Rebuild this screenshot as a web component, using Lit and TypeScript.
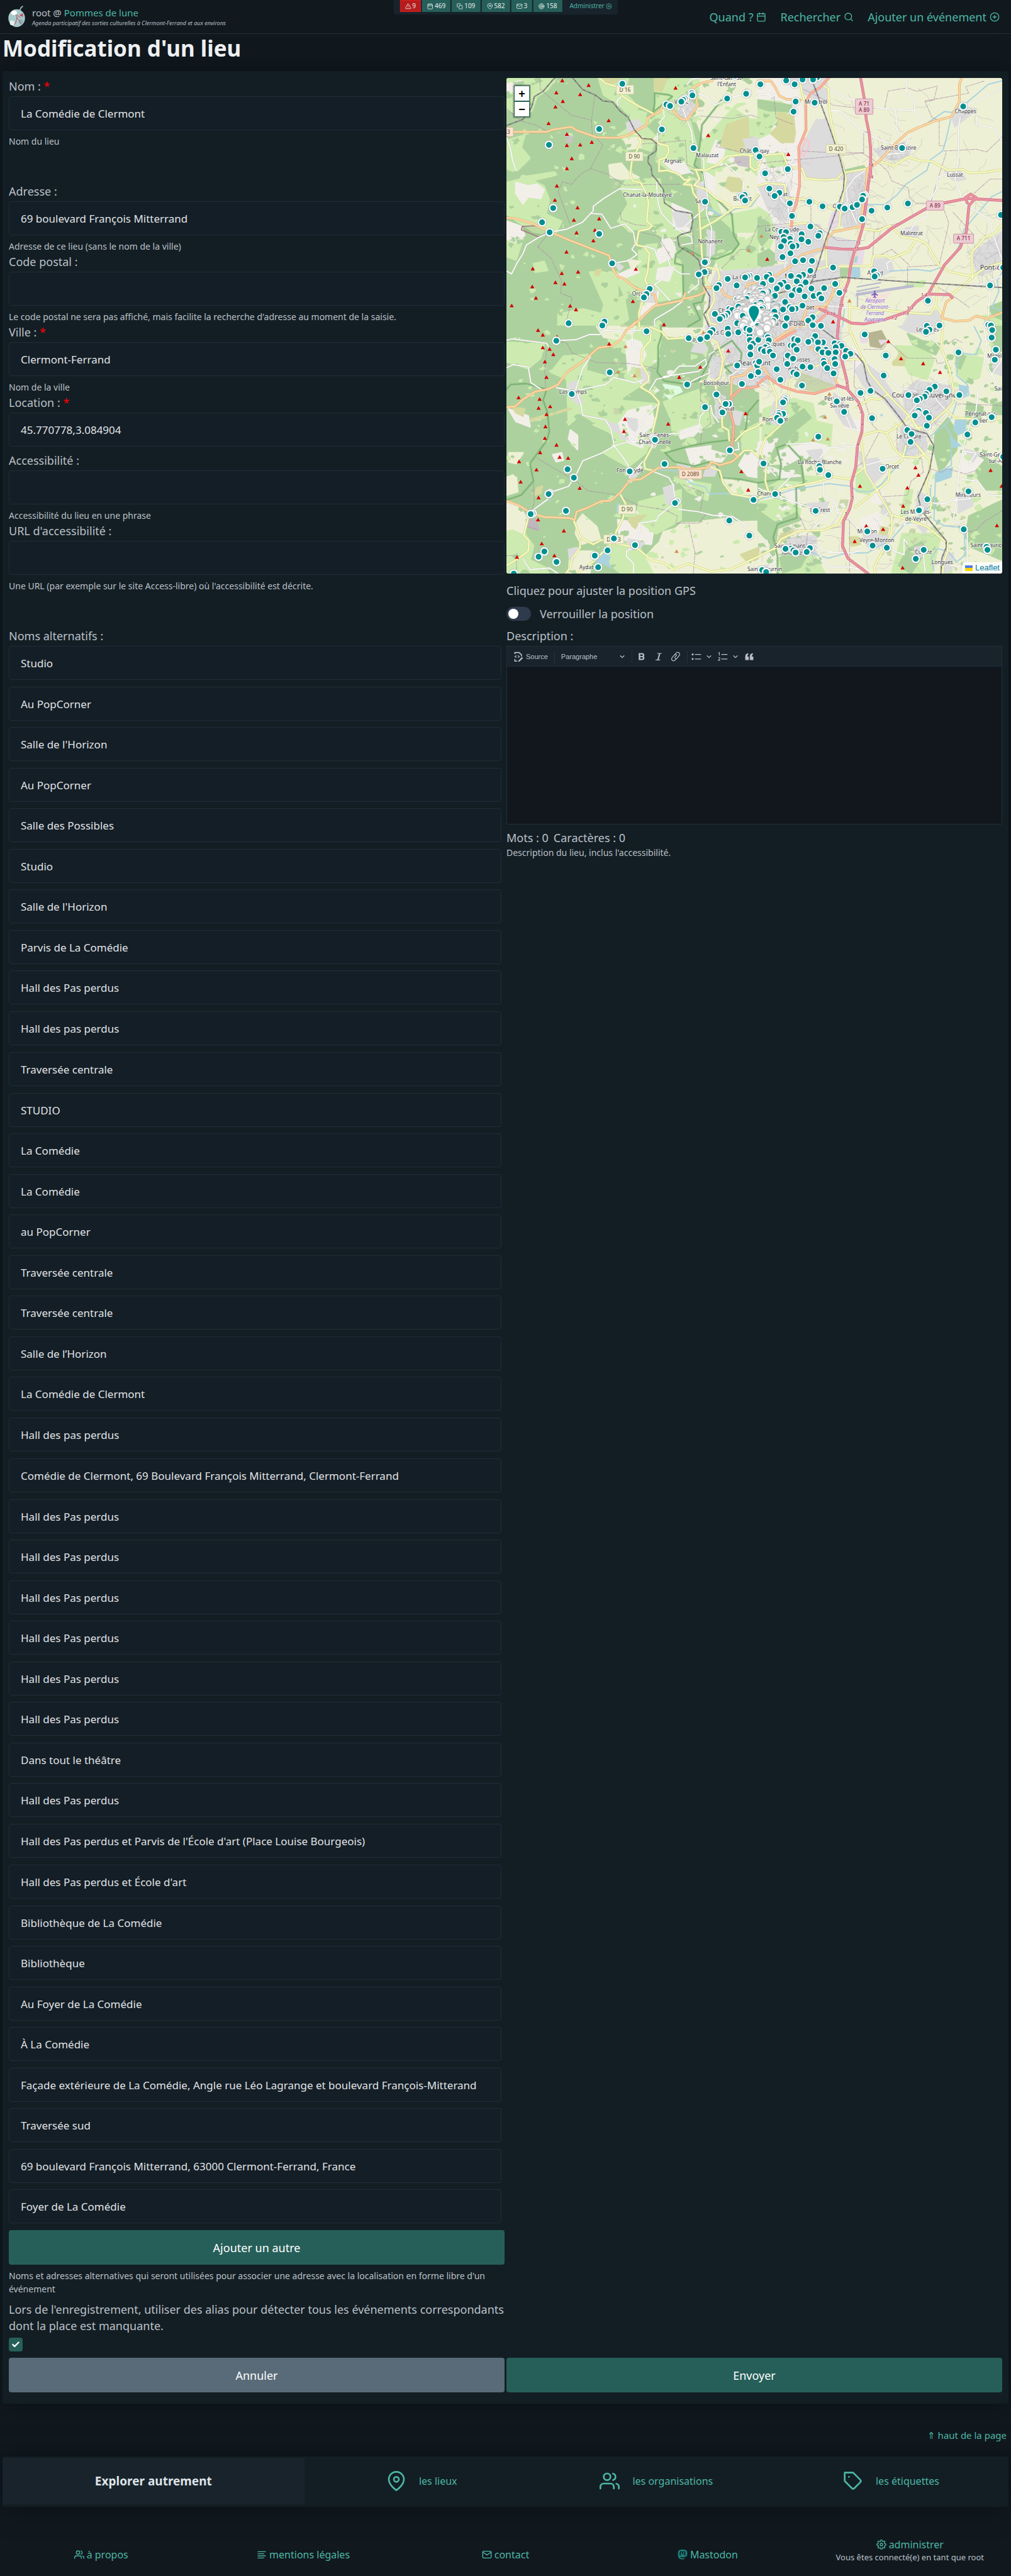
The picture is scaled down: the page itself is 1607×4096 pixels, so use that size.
import { LitElement, html, css, svg } from "lit";
import { customElement } from "lit/decorators.js";

/* ---------- Icons (24-unit stroke set) ---------- */

const GEAR = svg`<circle cx="12" cy="12" r="3"/><path d="M19.4 15a1.65 1.65 0 0 0 .33 1.82l.06.06a2 2 0 1 1-2.83 2.83l-.06-.06a1.65 1.65 0 0 0-2.8 1.17V21a2 2 0 0 1-4 0v-.09a1.65 1.65 0 0 0-2.9-1.08l-.06.06a2 2 0 1 1-2.83-2.83l.06-.06A1.65 1.65 0 0 0 3.1 14H3a2 2 0 0 1 0-4h.09a1.65 1.65 0 0 0 1.08-2.9l-.06-.06a2 2 0 1 1 2.83-2.83l.06.06A1.65 1.65 0 0 0 10 3.1V3a2 2 0 0 1 4 0v.09a1.65 1.65 0 0 0 2.8 1.17l.06-.06a2 2 0 1 1 2.83 2.83l-.06.06A1.65 1.65 0 0 0 20.9 10H21a2 2 0 0 1 0 4h-.09a1.65 1.65 0 0 0-1.51 1z"/>`;

const ICONS: Record<string, unknown> = {
  alert: svg`<path d="M10.3 3.9 1.8 18a2 2 0 0 0 1.7 3h17a2 2 0 0 0 1.7-3L13.7 3.9a2 2 0 0 0-3.4 0z"/><path d="M12 9v4M12 17h.01"/>`,
  calendar: svg`<rect x="3" y="4" width="18" height="18" rx="2"/><path d="M16 2v4M8 2v4M3 10h18"/>`,
  copy: svg`<rect x="9" y="9" width="13" height="13" rx="2"/><path d="M5 15H4a2 2 0 0 1-2-2V4a2 2 0 0 1 2-2h9a2 2 0 0 1 2 2v1"/>`,
  pin: svg`<path d="M21 10c0 7-9 13-9 13s-9-6-9-13a9 9 0 0 1 18 0z"/><circle cx="12" cy="10" r="3"/>`,
  mail: svg`<rect x="2" y="4" width="20" height="16" rx="2"/><path d="m22 6-10 7L2 6"/>`,
  target: svg`<circle cx="12" cy="12" r="10"/><circle cx="12" cy="12" r="6"/><circle cx="12" cy="12" r="2"/>`,
  gear: GEAR,
  search: svg`<circle cx="11" cy="11" r="8"/><path d="m21 21-4.3-4.3"/>`,
  plus: svg`<circle cx="12" cy="12" r="10"/><path d="M12 8v8M8 12h8"/>`,
  users: svg`<path d="M17 21v-2a4 4 0 0 0-4-4H5a4 4 0 0 0-4 4v2"/><circle cx="9" cy="7" r="4"/><path d="M23 21v-2a4 4 0 0 0-3-3.87M16 3.13a4 4 0 0 1 0 7.75"/>`,
  tag: svg`<path d="m20.6 13.4-7.2 7.2a2 2 0 0 1-2.8 0L2 12V2h10l8.6 8.6a2 2 0 0 1 0 2.8z"/><path d="M7 7h.01"/>`,
  lines: svg`<path d="M21 5H3M17 10H3M21 15H3M17 20H3"/>`,
  chevron: svg`<path d="m5 9 7 7 7-7"/>`,
};

const icon = (name: string) =>
  html`<svg class="icon" viewBox="0 0 24 24" aria-hidden="true">${ICONS[name]}</svg>`;

/* ---------- Map data: four tiles of 1440 units ---------- */

type Label = [number, number, string, number?];
interface Tile {
  dx: number;
  dy: number;
  areas: [string, string[]][];
  water: string[];
  rivers: string[];
  minor: string[];
  borders: string[];
  park: string[];
  secondary: string[];
  primary: string[];
  trunk: string[];
  motorway: string[];
  rail: string[];
  venues: string;
  peaks: string;
  hills: string;
  labels: Label[];
  shields: [number, number, string, string][];
}

const NW: Tile = {
  dx: -6, dy: -24,
  areas: [
    ["#add19e", ["0,0 960,0 1050,200 1130,400 1120,620 1200,800 1310,900 1330,980 1200,1060 1130,1200 1120,1440 0,1440"]],
    ["#cdebb0", ["6,24 290,24 240,90 180,130 150,210 90,240 6,200", "530,24 700,24 680,110 760,190 700,230 640,170 560,120", "6,380 110,350 90,420 140,480 60,560 6,540", "6,620 120,590 220,640 250,720 230,800 320,840 280,920 160,900 6,800",
      "90,590 280,560 290,575 150,610 80,612", "720,200 860,240 800,300 860,360 830,440 700,400 640,350 700,310", "690,600 880,600 900,720 1060,790 1060,920 900,930 800,880 700,890 640,840 700,740 660,650", "850,60 960,24 1100,24 1100,180 1020,280 900,330 860,250", "880,350 1050,260 1090,420 1070,540 950,560 860,500",
      "760,980 950,960 1000,1080 1010,1270 850,1300 680,1270 640,1180 760,1120", "480,1130 640,1130 640,1300 560,1310", "160,1080 220,1070 240,1120 170,1130", "300,1370 440,1340 640,1390 640,1440 300,1440", "560,1320 680,1290 700,1400 640,1440 540,1410", "1110,400 1340,150 1440,240 1440,900 1310,900 1200,800 1130,640",
      "1200,1060 1330,980 1440,900 1440,1130 1250,1130", "6,940 100,940 60,1060 6,1040"]],
    ["#f2efe9", ["6,60 90,40 90,90 6,110", "60,620 130,640 180,630 220,660 200,710 130,700 100,740 60,680", "6,840 90,870 110,920 60,960 6,940", "900,930 970,950 960,1040 880,1080 860,1030", "870,1110 960,1100 930,1180 860,1170", "900,500 1010,500 1050,560 980,575", "1200,380 1250,420 1230,520 1150,500", "950,740 1060,790 1040,900 960,870", "800,1250 870,1240 860,1300 770,1400 770,1310", "1140,560 1200,600 1190,700 1140,660", "630,1150 740,1100 760,1130 660,1170"]],
    ["#eef0d5", ["590,520 660,510 700,560 760,590 660,600 600,590", "675,370 780,360 770,420 700,430", "1320,200 1440,150 1440,250 1400,250", "1200,560 1340,500 1440,600 1440,760 1240,800 1200,700", "700,1060 770,1070 720,1110", "1110,24 1440,24 1440,150 1260,170 1150,110"]],
    ["#d6d99f", ["1380,250 1385,360 1410,430 1340,450 1225,410 1260,290", "1270,590 1350,600 1340,670 1290,670 1250,640", "850,24 920,30 890,100 850,90", "560,24 650,24 630,50 580,55", "515,1120 545,1115 530,1150 508,1145"]],
    ["#c9c3c6", ["320,360 350,340 385,355 375,390 315,375", "1290,480 1390,470 1390,530 1330,520"]],
    ["#dddcdc", ["990,170 1040,150 1090,190 1040,260 990,230", "690,280 750,260 790,310 700,330", "1080,600 1140,640 1150,760 1110,780", "1150,890 1190,900 1190,1020 1150,1060", "950,790 1040,790 1050,870 980,870", "1350,370 1440,360 1440,430 1370,430", "800,1220 860,1240 850,1300 800,1300", "610,1060 670,1100 650,1120", "1200,1130 1440,1110 1440,1440 1150,1440 1160,1230"]],
    ["#b4dd9f", ["1110,770 1200,800 1250,810 1130,885"]],
  ],
  water: ["1150,750 1220,800 1210,806 1148,760", "770,655 780,660 760,670"],
  rivers: ["1150,760 1210,805 1260,800 1310,770 1400,755 1440,700"],
  minor: ["8,365 30,430 40,490 60,550", "252,903 185,935 120,975 100,1025 65,1080 35,1140 8,1125", "252,903 350,885 440,845 500,780 500,755 560,710 650,655 790,660", "485,795 550,800 600,880 680,855 730,905 740,970 720,1000 750,1030 700,1065 610,1080",
    "865,340 865,400", "900,205 905,245 880,275 885,300", "1035,265 1060,330 1070,420 1110,460", "1010,200 1035,265", "1100,115 1150,130 1195,180 1263,141 1371,114", "860,620 870,740 890,795 930,840 1000,900 1060,930 1065,965 1005,975", "790,980 850,1000 860,1030 920,1040 940,1100 1000,1140 1050,1140",
    "1110,460 1130,490 1130,560 1150,700 1145,800 1175,880 1165,1050", "1250,510 1320,570 1355,610 1360,690", "850,1200 900,1250 935,1290", "920,1110 910,1160 850,1200", "1010,1295 950,1340 850,1400 850,1440", "965,510 1010,530 1070,570", "665,125 635,155 640,180", "1100,1150 1100,1200 1040,1245", "1130,770 1000,890", "1035,60 1060,30 1110,24"],
  borders: ["195,25 200,90 320,190 375,235 490,265 510,120", "490,265 495,345 555,405 485,540 430,570 375,630 325,615 300,670 370,860", "485,540 580,570 680,635 850,630 1000,630", "185,985 260,1050 320,1180 315,1250 380,1275 350,1400", "1110,240 1290,255 1400,235 1440,250", "780,400 1025,380 1035,520 1120,555 1340,500", "10,200 90,270 170,290 235,325", "655,790 660,830 740,860 800,865", "185,985 250,905", "1225,380 1200,415 1340,445", "1070,830 1290,800", "780,905 870,925 950,1060", "1230,1110 1340,1000 1380,1000 1440,860", "1060,800 1070,940 1070,1020"],
  park: ["1230,150 1120,290 1105,420 1075,520 1130,570 1140,660 1230,740 1290,800 1300,920 1330,970 1290,1020 1200,1055 1120,1045 1020,990 970,1030 965,1080 1010,1090 1015,1290", "850,110 930,120 950,130 890,180 840,220 850,170 850,110", "1040,1440 1110,1400 1070,1310 1120,1300 1135,1250"],
  secondary: ["535,25 570,55 640,75 665,125 700,150 760,185 850,230 900,205", "725,340 760,350 770,390 720,500 710,575 725,612 770,620 795,665 815,730 805,840 835,865 815,885 760,895 745,975 790,985 820,1025 810,1130 795,1175 820,1225 780,1300 760,1360 762,1440", "760,375 830,370 880,400 925,410 930,445 910,480 875,490 875,555 920,550 985,570 1020,605 1055,600 1015,630 1060,635 1070,680 1100,720 1110,885 1120,1045 1145,1100 1140,1180 1185,1240 1190,1290 1150,1370 1165,1420 1200,1430",
    "1075,545 1140,550 1205,520 1260,470 1345,460 1440,470", "1085,550 1105,600 1075,635 1145,660 1200,710 1300,762 1380,758 1440,690", "1110,885 1200,835 1300,765", "1145,1100 1210,1115 1220,1160 1190,1210", "1395,460 1395,530 1420,550 1440,540"],
  primary: ["0,331 235,331 270,318 375,302 405,322 520,362 635,365 685,355 805,293 812,250 880,215 895,185 940,185 975,235 1000,256 1035,262 1095,180 1085,135 1065,85 1110,55 1180,38", "0,820 60,825 160,855 252,900 370,950 590,1035 610,1110 640,1155 675,1168 740,1220 850,1260 865,1315", "720,1440 845,1325 1010,1290 1025,1250", "1025,1280 1100,1262 1135,1245 1130,1215 1230,1225 1245,1260 1300,1280", "1370,1230 1380,1200 1440,1185"],
  trunk: [], motorway: [],
  rail: ["0,297 100,260 150,190 165,130 215,100 270,35 290,20", "380,20 440,90 510,120 555,155 610,160 650,210 700,250 735,320 780,370 830,372 860,395 858,440 815,470 812,505 830,530 835,575 865,610 900,660 905,735 970,780 1060,795 1068,830 1055,900 1000,915 980,930 990,985 1060,1025 1100,1060 1120,1130 1125,1200 1165,1270 1160,1330 1130,1370 1160,1440"],
  venues: "666,57 534,315 248,405 891,317 1071,423 1062,110 1065,123 1022,142 1012,148 1002,159 917,175 938,183 1308,10 1263,141 1378,110 1371,114 1425,435 1440,468 1137,729 1340,697 1362,690 1350,703 1365,722 272,765 209,846 252,903 534,912 608,1080 822,1225 803,1255 789,1274 1145,1071 1136,1074 1134,1130 1101,1143 1266,1169 1317,1206 1215,1204 1202,1221 1390,1150 1378,1155 1365,1160 1433,1163 1410,1230 1430,1243 360,1421 564,1412 552,1434 1193,1368 1275,1340 1292,1345 1265,1365 1250,1380 1235,1385 1221,1397 1320,1285 1325,1302 1317,1357 1352,1362 1358,1378 1320,1421 1348,1430",
  peaks: "324,38 290,107 327,156 285,188 246,282 474,65 426,117 588,266 969,80 1155,350 350,344 350,407 426,404 492,389 378,482 350,539 293,638 282,719 411,762 390,833 534,825 510,890 405,905 501,950 348,1014 156,1110 321,1136 414,1128 285,1188 336,1196 153,1212 174,1277 36,1320 369,1322 402,1343 743,1112 726,1296 903,1428",
  hills: "1065,1022 1386,1004",
  labels: [[1260, 34, "Saint-Genest-"], [1260, 70, "l'Enfant"], [1002, 170, "Volvic"], [1150, 476, "Malauzat"], [1418, 450, "Châteaugay"], [953, 508, "Argnat"], [809, 700, "Chanat-la-Mouteyre"], [1118, 738, "Sayat"], [1350, 724, "Blanzat"], [1167, 967, "Nohanent"], [1130, 1140, "Durtol"], [775, 1264, "Orcines"], [1370, 1172, "La Glacière"], [1300, 1360, "Chamalières"]],
  shields: [[681, 91, "D 16", "d"], [734, 471, "D 90", "d"], [10, 331, "43", "n"]],
};

const NE: Tile = {
  dx: 1434, dy: -24,
  areas: [
    ["#f2efe9", ["0,24 200,24 250,200 240,540 200,800 120,880 0,860"]],
    ["#cdebb0", ["0,150 130,160 200,200 100,260 60,340 0,370", "0,760 60,800 100,900 60,1000 0,960", "40,470 150,460 160,520 60,530", "850,1190 950,1180 940,1210 830,1215", "1280,1380 1389,1360 1389,1440 1300,1440"]],
    ["#add19e", ["0,150 60,160 190,180 170,215 60,210 0,190", "0,820 60,850 70,920 20,980 0,940", "0,1030 60,1000 120,1050 60,1110 0,1090", "490,550 600,525 610,540 580,570 500,580", "455,1110 510,1110 510,1155 455,1155", "1310,1330 1389,1300 1389,1400 1340,1380"]],
    ["#d6d99f", ["110,220 200,240 210,340 200,390 130,390 70,340 110,300", "180,1090 240,1100 210,1130"]],
    ["#dddcdc", ["170,60 240,50 260,110 290,130 390,170 390,24 240,24 180,24", "330,262 380,262 430,400 490,530 480,600 380,610 270,590 240,540 235,440", "490,580 620,540 620,640 590,850 500,880 460,850 490,760", "660,430 780,410 830,390 870,430 850,470 790,490 700,480", "1100,240 1180,190 1240,200 1200,240 1120,300", "1060,550 1150,550 1180,600 1120,610 1080,580", "660,1060 750,1050 770,1120 700,1150 650,1130", "110,640 160,620 190,760 150,850 80,800", "0,640 100,630 120,760 60,780", "840,880 910,870 910,930 840,920", "1230,1010 1389,900 1389,1100 1260,1150 1230,1080", "390,920 570,960 530,1080 400,1080", "0,1110 200,1080 460,1060 460,1440 0,1440", "860,1370 1030,1350 1040,1440 820,1440", "100,870 350,860 380,1000 230,1080 100,1060"]],
    ["#e8dbe7", ["420,800 450,770 465,850 420,890 400,860", "540,1020 600,1010 590,1080 530,1090"]],
    ["#f4e2db", ["300,1180 330,1130 450,1110 455,1155 360,1180", "630,1270 750,1250 700,1310 620,1300"]],
  ],
  water: ["530,1100 580,1100 580,1160 530,1160", "535,1040 570,1040 560,1080 540,1070"],
  rivers: ["1389,40 1310,60 1240,120 1180,170 1100,220 1060,215 970,275", "1095,260 1080,330 1065,390 1050,440 980,490 960,550 900,590 840,630 790,690 720,745 620,745", "1389,670 1330,700 1280,760 1220,830 1170,890 1160,950 1110,1040 1060,1095 980,1125 900,1115 750,1125", "1389,1130 1360,1180 1370,1240 1330,1330 1389,1350", "480,1440 490,1340"],
  minor: ["400,80 500,140 550,150", "660,190 780,205 890,210 940,270 905,310", "840,20 845,105 890,150 890,210", "780,205 790,290 780,300 800,330 800,380", "410,210 460,210 540,280 600,335 700,380 770,400", "1389,80 1240,160 1180,180", "1240,230 1245,290 1340,310 1389,380", "1150,250 1140,300 1140,450 1130,550 1120,600 1150,680 1160,735 1320,830 1335,910", "1100,560 1020,590 1015,660 970,730", "610,550 550,590 500,660 510,740 560,850", "970,770 960,810 890,850 870,890 800,890", "740,1120 730,1080 760,1060", "1320,1206 1310,1390 1280,1440", "1389,1150 1250,1205 1210,1200", "1335,910 1389,1060", "0,120 90,115", "130,450 230,415 180,520", "120,700 170,760 180,860", "155,560 160,640", "150,1120 160,1040 130,1000", "380,1320 520,1335", "730,460 830,450 860,340"],
  borders: ["240,80 300,110 370,145 430,180 570,195 720,195 740,98 850,80 900,100 1020,70 1000,150 950,160 990,250 1030,265 1030,410 1060,410", "250,440 420,450 600,450 600,330 630,335", "0,510 100,500 430,470 600,450", "590,450 700,520 740,560 760,610 855,650 860,700 900,740 970,740", "1060,440 1240,430 1300,445 1389,360", "1070,450 1010,640 980,740", "1060,780 1085,850 1070,920 1030,1090 850,1100 850,1210", "1110,790 1230,920", "1230,680 1320,600 1389,600", "90,130 100,250 200,290", "180,700 300,740 300,860", "650,1090 660,890 800,850 970,770", "700,1030 760,1000 860,1090", "1020,1215 1110,1265 1200,1330", "950,155 1200,110 1180,75 1290,40", "0,870 200,850 330,860 450,950 600,950"],
  park: [],
  secondary: ["365,65 400,85 405,210 430,350 490,560 500,600 470,770 460,870 430,900", "190,535 250,540 270,595 380,605 450,600 480,565 620,540", "700,500 770,525 850,475 920,495 990,500 1080,550 1165,545 1200,565 1300,560 1389,545", "160,710 280,715 400,760 480,790", "0,640 40,625 150,630 160,710", "580,880 680,895 750,865 820,930 900,940 960,970 1030,1090 1100,1130 1220,1155 1300,1100 1389,1075", "900,940 860,1010 750,1055 730,1035 655,1040 645,1095 530,1095 385,1100 300,1120 200,1200 120,1260", "1220,1155 1215,1020 1290,930 1340,915 1389,860", "1220,1160 1100,1260", "520,1330 700,1345 850,1360 980,1370 1010,1320 1020,1220 1005,1200", "1050,1440 1050,1380 1010,1320", "0,530 30,465 140,455 165,520", "240,60 260,150", "385,990 390,1100", "580,880 560,1000 510,1160 380,1320 260,1440", "480,1160 330,1250 200,1330", "180,860 270,850 340,880", "520,1440 520,1290"],
  primary: ["0,40 70,40 95,75 120,125 160,145 240,150", "1160,20 1145,60 1145,160 1100,245 1000,270 900,312 850,335 790,390 700,485 660,520 620,540 615,640 595,770 580,870 430,900 390,940 385,990 250,1030 180,1100 100,1150 0,1180", "1105,1275 1070,1300 1045,1390 1120,1410 1200,1405 1240,1380 1300,1395 1389,1360", "440,1180 420,1260 385,1330 280,1330 240,1440"],
  trunk: ["405,20 350,80 300,110 270,160 272,320 230,420 235,560 235,640 215,750 190,800 190,870", "385,1330 385,1370 330,1420"],
  motorway: ["582,20 605,150 615,260 632,340 640,430 640,540 625,640 600,850 570,960 545,1020 525,1100 515,1180 480,1270 465,1350 455,1440", "385,990 470,998 560,1000 625,990 760,880 960,765 1060,735 1190,710 1389,722", "1190,735 1180,705 1210,685 1240,705 1200,750 1185,900 1150,990 1060,1090 970,1250 900,1300 850,1355 720,1400 600,1425 530,1420 470,1390 350,1340", "970,1255 1090,1258 1105,1275", "640,525 640,580"],
  rail: ["315,60 400,290 465,480 490,580 485,660 440,790 380,960 330,1120 290,1220", "0,1290 120,1250 330,1180 480,1160 700,1175 1000,1195 1389,1218", "90,1380 130,1410 250,1412 360,1440"],
  venues: "159,38 207,60 252,33 335,20 312,33 12,60 213,158 321,165 201,216 1167,186 819,423 7,471 168,543 39,567 63,654 120,678 93,696 180,738 291,729 366,755 192,810 465,757 500,755 496,762 492,768 537,760 562,747 605,690 597,695 591,716 645,780 735,762 852,739 591,828 297,870 1382,804 132,900 158,902 144,930 185,930 180,940 147,952 247,914 246,943 285,957 350,908 342,923 185,968 218,980 195,984 129,984 183,1023 138,1044 210,1068 255,1062 306,1066 426,1104 297,1122 660,1125 675,1148 663,1155 62,1145 48,1157 75,1175 27,1197 186,1152 255,1145 232,1158 270,1188 219,1182 145,1190 125,1202 105,1223 168,1215 210,1232 240,1215 234,1233 303,1223 375,1221 438,1197 462,1248 57,1240 190,1262 264,1268 315,1266 348,1258 360,1280 95,1265 60,1283 153,1300 252,1321 90,1310 110,1320 105,1337 141,1343 180,1330 213,1338 192,1341 65,1337 162,1392 309,1387 285,1406 45,1365 310,1432 357,1436 153,1436 966,1293 1320,1206 1395,1104 960,1436 1032,1434 1310,1430 1325,1434 50,1395",
  peaks: "171,458 51,1056 426,1412",
  hills: "18,924 519,1293",
  labels: [[328, 171, "Ménétrol"], [1180, 224, "Chappes"], [799, 433, "Saint-Beauzire"], [110, 697, "Cébazat"], [1120, 588, "Lussat"], [470, 767, "Gerzat"], [873, 919, "Malintrat"], [140, 899, "La Combaude-"], [110, 941, "Neyrat"], [240, 1164, "Montferrand"], [666, 1144, "Aulnat"], [1340, 1117, "Pont-du-", 38], [270, 1344, "Herbet"], [80, 1374, "Centre"], [175, 1436, "La Raye-Dieu"]],
  shields: [[603, 187, "A 71|A 89", "a"], [443, 429, "D 420", "d"], [1007, 751, "A 89", "a"], [1169, 939, "A 711", "a"]],
};

const SW: Tile = {
  dx: -6, dy: 1416,
  areas: [
    ["#add19e", ["0,0 720,0 850,120 860,240 1000,320 1290,330 1440,380 1440,900 1440,1100 1000,1110 850,1240 700,1407 0,1407", "880,60 1160,80 1200,180 1140,300 900,310 865,200"]],
    ["#cdebb0", ["6,90 220,100 200,180 130,240 6,200", "330,170 470,160 460,250 600,290 760,220 780,330 640,420 860,440 780,520 520,550 430,500 360,560 350,300 260,260", "500,560 720,500 840,620 800,720 700,800 560,720 650,660 590,600", "560,0 880,0 890,50 860,200 780,250 700,160 600,110", "900,430 1100,360 1120,470 1020,560 940,520", "6,1120 110,1180 160,1250 140,1330 300,1407 6,1407", "760,1000 1000,930 1000,1100 860,1180 740,1130", "600,1180 760,1250 840,1407 660,1407 560,1330", "940,440 1140,380 1190,560 1060,600 950,590", "1340,600 1440,550 1440,700 1350,700", "980,870 1170,900 1150,990 1040,940", "1130,90 1150,130 1140,170 1125,150"]],
    ["#eef0d5", ["6,990 80,1020 120,1090 110,1180 40,1150 6,1160", "410,1110 440,1070 520,1140 540,1210 430,1240 400,1180", "850,1300 900,1170 1120,1110 1300,1100 1350,1180 1440,1220 1440,1330 1260,1370 1040,1350 900,1390", "370,1280 500,1280 480,1407 360,1407", "1240,860 1440,890 1440,960 1280,950", "520,0 740,0 710,80 560,60", "6,860 60,840 70,940 6,960", "20,720 100,720 60,780 20,770", "1110,1110 1280,1090 1340,1160 1300,1230 1100,1240"]],
    ["#f2efe9", ["20,470 130,510 140,570 60,540", "370,590 410,620 410,700 360,640", "690,60 770,90 800,160 770,220 820,290 760,310 700,260 690,150", "640,560 700,480 830,450 850,560 790,600 780,690 700,660", "1030,700 1170,680 1160,760 1060,790", "1370,720 1440,720 1440,860 1380,850 1330,790", "640,1100 760,1120 840,1180 830,1240 650,1220", "980,600 1110,560 1120,600 1000,640", "270,730 320,720 330,760 290,770", "1120,690 1260,730 1230,770 1120,760"]],
    ["#d6d99f", ["700,1085 800,1075 760,1110 740,1150 705,1120", "40,460 110,470 100,510 60,490", "140,530 370,465 375,468 150,540", "740,240 770,240 770,290 740,290", "1340,1300 1440,1260 1440,1330 1370,1330", "180,920 210,910 200,950 165,960"]],
    ["#dddcdc", ["360,330 400,310 410,380 440,430 410,440 370,400", "570,540 640,560 660,640 700,640 600,580", "690,520 750,530 750,600 710,580", "1160,160 1220,180 1230,300 1170,290", "820,600 870,650 850,690 820,680", "700,830 770,820 720,880", "1190,380 1250,400 1240,520 1200,520", "1300,480 1350,490 1330,560 1300,550", "1150,790 1210,800 1190,850 1130,850", "1090,80 1150,120 1130,150 1060,140", "1140,0 1440,0 1440,340 1290,320 1250,120 1160,60", "700,1210 790,1230 760,1270 700,1270", "980,780 1050,790 1050,820 990,820", "770,240 820,260 820,320 780,320", "360,1270 410,1260 380,1340 365,1320", "900,920 960,900 950,1010 920,1010"]],
    ["#bfb7bb", ["120,1100 175,1100 190,1160 130,1140"]],
    ["#dffbe2", ["900,330 990,345 1005,370 960,390 935,410 905,385 925,370"]],
  ],
  water: ["545,1280 600,1310 590,1340 605,1380 550,1350 530,1390 510,1330 525,1300", "635,1005 655,1010 645,1060 632,1060", "250,980 262,985 255,1005"],
  rivers: ["870,815 960,820 1010,850 1060,895 1140,915 1160,955 1260,950 1320,965 1440,990"],
  minor: ["0,80 40,70 235,95 245,115", "290,80 400,75 480,45 540,45 560,20 670,25 800,20", "0,238 45,217 130,230 145,320 205,358", "485,170 440,240 400,360 430,440 440,505 570,530 600,580 620,680 670,745 705,800", "380,370 570,330 620,290 740,320 790,300", "290,348 380,365", "870,440 790,520 720,650 620,680 550,720 440,765 410,830 385,870 360,910 270,940 240,985 150,1050", "720,655 850,645", "850,615 980,610 1100,570 1110,510 1137,480", "820,365 860,300 930,285 990,225 1080,225 1140,185 1145,215 1100,255 900,285", "1035,330 1080,300 1160,265 1160,240", "840,825 930,860 955,900 965,980", "966,1005 920,1040 870,1080 860,1105 760,1120 765,1160 740,1245", "985,1040 1100,1055 1180,1075 1290,1080 1370,1130 1340,1180 1389,1195", "740,1250 690,1280 690,1310 730,1350 730,1407", "100,1325 140,1385 250,1375 300,1407", "720,30 725,110 770,140", "1137,460 1170,450 1180,500 1215,545", "1280,280 1340,240 1420,240", "1160,160 1190,140", "705,860 780,770", "0,1030 60,1010", "1325,660 1330,700 1290,705", "1010,1407 1020,1370"],
  borders: ["290,80 350,95 380,150 520,205 700,210 790,225 860,240", "235,130 225,240 228,358", "180,750 300,820 400,880 470,935 640,960 760,1020 910,1045 980,1080 970,1120 1100,1120 1150,1060", "1115,320 1110,420 1160,470 1170,550 1120,590 1110,670", "160,890 165,1000 120,1140 190,1160", "1045,1130 1080,1290 1070,1407", "150,930 165,950", "1010,900 1130,945 1110,1050", "0,1305 60,1305 65,1390"],
  park: ["0,365 30,330 120,325 235,358 215,420 240,490 250,600 235,650 140,780 160,880 90,960 0,990", "885,0 890,50 870,110 870,220 865,260 905,310 1010,325 1100,310 1140,240 1180,150 1290,80 1345,150 1340,200 1250,230 1290,270", "910,720 1050,680 1160,660 1330,640 1370,580 1380,490 1440,420", "910,720 960,770 1080,795 1160,770", "1200,780 1225,860 1340,870 1440,890"],
  secondary: ["830,20 825,80 780,130 772,210 815,280 815,310 770,345 830,380 875,430 860,510 840,590 838,680 790,770 795,810 840,820", "765,10 830,5 890,30 925,70 1000,65 1160,65 1205,90 1240,190 1220,290 1190,310 1210,400 1230,440 1235,570 1270,590 1275,650", "650,950 685,1010 670,1090 630,1170 620,1240", "390,1105 425,1200 500,1240 550,1215 600,1230 700,1250 760,1270 830,1330 900,1345 960,1385 1040,1350 1170,1395 1290,1380 1440,1310", "425,1220 425,1260 380,1320 370,1370 345,1407", "410,1407 500,1340 600,1240", "130,1090 105,1190 135,1220 130,1280 60,1330 0,1365", "1170,800 1220,820 1240,890 1290,955 1410,975", "1325,740 1360,705 1400,705 1440,740", "1310,650 1360,600 1440,565"],
  primary: ["0,460 55,455 100,415 170,370 240,358 300,330 350,260 440,200 530,120 610,110 660,70 690,20 740,-25", "0,990 80,1020 140,1060 220,1085 360,1090 395,1100 405,1055 460,1035 545,995 600,992 650,950 710,875 770,870 870,805 990,800 1040,815 1150,805 1175,770 1220,790 1290,770 1325,740 1278,705", "1285,400 1290,290 1360,275 1390,240 1440,225"],
  trunk: ["1440,340 1390,350 1345,350 1290,400 1280,490 1300,560 1298,620 1285,700"],
  motorway: [], rail: [],
  venues: "804,27 290,81 594,261 378,384 1035,330 1044,66 1110,72 1180,20 1165,37 1149,60 1266,12 1269,42 1326,33 1371,26 1395,22 1440,30 1390,50 1392,77 1420,90 1410,98 1395,117 1395,159 1320,222 1425,208 1434,222 1420,273 1398,282 1347,327 1202,387 1273,441 1254,441 1236,489 1137,459 1278,705 840,633 845,638 852,645 906,783 708,825 354,813 390,861 252,948 246,954 345,1050 155,1065 144,1068 975,997 966,1005 1413,987 1275,1105 1389,1191 618,1207 738,1245 582,1275 509,1305 528,1371 222,1281 189,1311 291,1341 48,1407",
  peaks: "186,20 213,47 213,119 252,128 273,158 225,200 591,98 234,288 1269,138 1110,230 990,288 75,404 195,413 189,464 255,455 234,500 681,527 675,596 927,554 228,569 225,636 291,674 198,717 309,743 357,749 78,768 177,815 87,884 423,920 189,974 186,1100 333,1163 207,1236 66,1313 279,1304 1368,495 1344,825 1383,930 294,58",
  hills: "684,113 642,258 735,279 1128,33 975,1280",
  labels: [[385, 382, "Laschamps"], [1201, 331, "Boisséjour"], [852, 631, "Saint-Genès-"], [852, 670, "Champanelle"], [709, 831, "Fontfreyde"], [461, 1382, "Aydat"], [1260, 480, "Ceyrat"], [1418, 220, "Beaumont", 38], [1085, 86, "Royat"], [1250, 44, "Les Carmes"], [1478, 1393, "Saint-Saturnin"]],
  shields: [[1054, 841, "D 2089", "n"], [693, 1042, "D 90", "d"], [617, 1212, "D 213", "d"]],
};

const SE: Tile = {
  dx: 1434, dy: 1416,
  areas: [
    ["#cdebb0", ["30,470 200,410 310,440 330,540 420,560 410,680 180,670 60,760 20,680", "0,880 250,850 400,860 260,900 0,960", "0,1000 120,980 240,1040 230,1110 90,1140 0,1100", "780,110 960,120 1000,190 960,300 860,270", "1120,150 1280,180 1260,290 1180,320 1130,260", "820,1180 1040,1180 990,1407 760,1407", "560,810 640,820 650,960 560,940", "120,1330 320,1300 380,1407 120,1407", "840,930 880,930 850,1070 810,1080"]],
    ["#add19e", ["70,640 130,560 260,470 300,520 200,600 150,680 80,760", "0,800 130,790 130,700 240,730 260,880 120,870 0,930", "90,1120 220,1060 240,1100 110,1150 90,1300 60,1320 80,1180", "1130,700 1060,800 1030,820 1000,700 1010,600 1080,520 1130,600", "1250,720 1389,800 1389,930 1300,930 1240,850", "1200,1080 1389,990 1389,1330 1220,1260 1180,1200", "850,40 930,80 1040,100 1010,160 880,100", "0,1050 100,1120 80,1250 0,1160", "120,1300 300,1260 240,1370 140,1400", "850,1270 940,1220 940,1300 870,1407 800,1360", "1320,0 1389,0 1389,130 1340,180", "1130,150 1180,170 1150,240 1130,230", "1340,440 1389,430 1389,500 1330,500", "1190,430 1280,460 1260,540 1180,520"]],
    ["#f2efe9", ["0,660 110,640 60,740 0,720", "120,710 300,660 390,680 340,760 250,740 140,800", "60,800 240,850 130,860", "160,900 240,920 220,1020 160,980", "640,950 700,930 720,1010 650,1000", "580,1100 680,1060 720,1150 600,1180", "1170,700 1280,760 1220,830 1150,830", "520,520 580,540 600,590 500,580", "540,110 600,160 600,300 540,260"]],
    ["#d6d99f", ["810,140 835,180 830,220 770,220 765,205 790,180", "700,1140 740,1150 730,1200 690,1180", "520,1200 570,1200 580,1240 530,1250", "130,1180 200,1160 150,1220 110,1230"]],
    ["#c8d7ab", ["250,270 400,260 430,330 330,370 210,340", "470,990 510,990 500,1030 460,1030"]],
    ["#b7b491", ["630,40 700,25 730,80 700,120 640,110"]],
    ["#e8dbe7", ["580,60 620,60 620,90 590,90", "690,80 730,80 700,100"]],
    ["#dddcdc", ["0,0 470,0 470,180 440,330 260,260 80,330 0,300", "800,0 1010,0 1000,40 860,30", "600,200 700,280 760,370 850,500 820,550 700,400 600,340 550,250", "820,380 900,310 1100,340 1110,430 1000,560 900,560 840,490", "820,560 950,600 960,700 850,750 800,690", "430,380 480,420 560,590 490,560 440,480", "600,760 680,750 720,830 650,900 600,830", "720,980 770,1090 700,1060", "910,940 970,970 960,1040 900,1030", "600,1180 740,1190 720,1250 620,1250", "160,1210 330,1190 330,1300 170,1290", "90,430 160,410 140,520 100,560 60,540", "280,710 360,700 370,790 330,790", "1330,220 1389,200 1389,280 1340,260", "1140,950 1220,940 1220,1020 1140,1060", "1180,700 1260,720 1220,770", "560,710 600,720 590,790", "900,1130 960,1140 950,1180", "280,1010 400,1000 380,1060 300,1060", "1050,1300 1110,1290 1100,1390 1050,1407", "0,1370 60,1360 70,1407 0,1407", "890,1260 950,1250 930,1310 890,1320"]],
  ],
  water: ["1120,530 1190,530 1180,600 1140,620 1110,590", "1010,830 1110,800 1100,860 1010,890", "1140,330 1200,340 1190,390 1150,400", "1090,620 1160,680 1100,690", "690,500 710,500 705,515"],
  rivers: ["1230,0 1270,80 1240,160 1140,150", "1140,170 1130,280 1190,330 1200,390 1150,410", "1130,430 1100,520 1060,560 980,625", "1060,560 1100,620 1100,690 1150,680", "1100,700 1100,790 1010,840 1000,1100 1060,1135 1170,1145 1180,1300 1130,1340 1080,1280 1020,1265 985,1320 1000,1390", "860,650 850,700 820,760 750,840 700,900 640,940 570,940 540,920", "0,985 100,960 190,930 400,895 530,910", "270,1260 330,1300 400,1320 500,1290 620,1290 760,1210 830,1130 900,1100 980,1020 980,920", "0,290 60,280"],
  minor: ["0,310 55,345", "610,200 700,260 800,350 900,370", "450,350 465,430 500,510 530,580 580,595", "560,680 470,685 400,690 350,750", "1285,0 1300,100 1285,200 1330,270 1250,380 1240,480 1210,540 1180,640 1145,800 1130,980 1110,1100 1190,1160 1190,1407", "1160,870 1250,880 1310,960 1389,965", "1210,980 1100,990 1060,1010 990,1005", "610,790 720,760 800,745", "160,670 290,665 330,640", "110,930 190,850", "370,880 370,960 440,1000 450,1060 510,1080 560,1140 600,1170", "0,920 90,960 180,990 320,1040", "300,1160 420,1050 430,1000", "320,1240 400,1285 530,1290 640,1260", "310,1240 400,1370 520,1370 590,1385", "850,1240 830,1210 830,1300 730,1260", "950,30 1040,120 1060,210 1010,290 1000,340", "1330,270 1389,390", "1330,270 1380,200", "1090,300 1000,330 870,480 840,520", "740,1060 690,1100 660,1180", "230,1190 310,1160", "1170,710 1240,720 1200,780", "30,780 100,850", "1010,410 1060,470", "950,1400 940,1290", "0,1200 50,1220 60,1290 100,1340 30,1390", "910,1130 830,1130 870,1060", "1020,1340 1100,1360 1150,1370"],
  borders: ["600,130 710,130 740,85 850,180 1010,180 1020,210 1060,205", "550,190 545,340 600,400 650,560 690,600 600,770 560,800", "790,570 790,690 810,730 930,750 940,830 870,880 850,960 700,970 690,930", "1140,440 1389,450", "240,1090 280,1180 270,1290", "980,810 1040,830 1080,810 1180,840 1240,820", "1389,1050 1290,1110 1240,1160 1190,1170", "520,1110 520,1400", "830,1220 860,1270 980,1290 1010,1250", "300,1170 470,1140", "1080,100 1120,70 1160,90"],
  park: ["0,890 120,870 130,780 105,690 165,670 240,750 260,890 215,920 220,1090 110,1125 85,1200 110,1310 110,1407"],
  secondary: ["520,20 560,110 600,190 640,270 740,390 850,500 920,590", "600,185 480,190", "560,460 640,410 690,415 740,385", "590,620 680,595 730,605 790,570 780,555", "730,605 770,690 820,740 910,745 945,725", "870,500 900,580 960,570 1070,475 1110,430 1110,350 1085,230 1040,120 1050,20", "920,700 975,760 975,830 955,900 985,1000 980,1040", "1070,475 1120,520 1220,525 1330,540 1389,515", "585,640 610,830 680,940 760,1080 760,1170 730,1240 660,1370 665,1407", "0,980 60,945 230,905 330,885 430,855 520,870 610,800", "550,1030 640,960 740,880 750,810 820,760 840,680", "90,1270 130,1210 230,1165 370,1160 460,1125 500,1040", "765,1075 850,1100 960,1140 1070,1230 1080,1280 1055,1340 1050,1407", "60,290 105,400 100,500 0,560", "130,560 40,640 10,710 45,790 40,880 60,945", "170,410 180,310 250,250 440,190", "0,1310 100,1260", "870,500 800,570", "840,600 890,660 945,725"],
  primary: ["300,120 400,200 450,330", "60,280 20,220", "90,80 210,0"],
  trunk: ["0,325 50,285 130,340 220,370 320,382 440,345", "210,25 110,80"],
  motorway: ["455,0 450,60 480,210 505,310 510,360 570,430 595,500 590,600 565,680 555,800 530,890 535,980 520,1040 485,1110 480,1250 510,1320 625,1407", "450,335 510,355"],
  rail: ["370,20 450,80 560,160 600,210 620,310 650,360 720,410 800,510 850,580 960,610 1000,680 975,820 910,970 930,1050 1070,1220 1070,1260 1045,1320 1040,1407"],
  venues: "606,45 0,75 15,10 15,40 40,50 55,60 60,78 205,72 225,78 185,108 203,110 219,132 324,54 300,80 285,87 368,90 340,90 435,95 465,100 474,110 385,132 342,128 366,147 399,150 441,118 441,147 500,138 525,155 495,171 50,108 40,118 15,130 35,140 64,130 66,143 84,165 168,165 198,183 165,213 105,243 435,185 372,195 375,213 445,210 438,213 393,237 252,228 297,231 200,262 219,272 429,267 126,303 249,336 726,165 714,279 576,375 582,378 639,366 154,410 150,420 141,432 447,426 855,390 1005,342 975,360 1071,369 955,385 947,399 920,412 903,420 1140,385 1145,390 1140,147 975,18 955,30 1332,20 1329,63 1353,132 1347,189 118,492 141,497 115,505 107,520 126,537 489,486 648,522 912,480 955,492 905,498 898,503 891,507 972,519 960,565 849,590 873,612 867,657 1329,516 1236,546 1191,615 342,627 25,778 30,780 348,795 351,816 399,846 708,810 1395,742 96,954 1197,939 963,984 922,1043 915,1047 327,1050 1170,1155 621,1167 651,1248 732,1260 942,1272 897,1323 1300,1255 1305,1272 185,1265 155,1266 200,1275 213,1287 294,1262 276,1284 22,1387 45,1398 5,200 0,260",
  peaks: "741,84 813,182 939,210 1035,260 895,803 912,845 849,918 579,908 825,1022 615,1135 711,1154 549,1223 822,1374 1323,818 1386,908 1359,1133",
  hills: "405,384 381,515 396,639 312,645",
  labels: [[964, 27, "Lempdes"], [98, 111, "Jacques"], [218, 198, "Landoisses"], [225, 250, "Aubière"], [465, 422, "Pérignat-lès-"], [463, 460, "Sarliève"], [945, 405, "Cournon-d'Auvergne", 38], [96, 541, "Romagnat"], [350, 785, "La Roche-Blanche"], [858, 636, "Le Cendre"], [762, 809, "Orcet"], [1271, 509, "Pérignat-sur-"], [1270, 549, "Allier"], [1345, 180, "Mezel"], [1195, 969, "Mirefleurs"], [62, 964, "Chanonat"], [352, 1057, "Le Crest"], [898, 1068, "Les Martres-"], [898, 1106, "de-Veyre"], [620, 1177, "Monton"], [675, 1227, "Veyre-Monton"], [940, 1296, "Corent"], [184, 1260, "Saint-Amant-"], [190, 1298, "Tallende"], [1048, 1354, "Longues"], [1305, 1258, "Saint-Maurice"], [1365, 739, "Saint-Georges-"], [1375, 777, "sur-Allier"], [1385, 365, "Saint-"]],
  shields: [],
};

const TILES = [NW, NE, SW, SE];
const EXITS: [number, number, string][] = [[640, 530, "14"], [640, 596, "14"], [568, 975, "15"], [558, 1007, "15"], [493, 1244, "16"], [472, 1327, "16"], [413, 1374, "1.1a"], [944, 1268, "1.4"], [864, 1342, "1.3"], [839, 1374, "1.3"], [773, 1400, "1.2"], [506, 1764, "2"], [571, 1893, "2"], [586, 1934, "3"], [592, 2004, "4"], [568, 2118, "4"], [537, 2420, "5"], [500, 2513, "5"]];

/* Small deterministic generator for land-cover texture and street grids. */
const seeded = (seed: number) => () => {
  seed = (seed * 1664525 + 1013904223) % 4294967296;
  return seed / 4294967296;
};

const speckle = (seed: number, n: number, x: number, y: number, w: number, h: number, size: number) => {
  const r = seeded(seed);
  let d = "";
  for (let i = 0; i < n; i++) {
    const cx = x + r() * w, cy = y + r() * h, s = size * (0.3 + r());
    for (let k = 0; k < 9; k++) {
      const a = (k / 9) * Math.PI * 2, q = s * (0.35 + r() * 0.9);
      d += `${k ? "L" : "M"}${Math.round(cx + Math.cos(a) * q)} ${Math.round(cy + Math.sin(a) * q * 0.75)}`;
    }
    d += "Z";
  }
  return d;
};

const streets = (seed: number, n: number, x: number, y: number, w: number, h: number) => {
  const r = seeded(seed);
  let d = "";
  for (let i = 0; i < n; i++) {
    const a = r() * 6.28;
    let px = x + r() * w, py = y + r() * h;
    d += `M${Math.round(px)} ${Math.round(py)}`;
    for (let k = 0; k < 3; k++) {
      px += Math.cos(a + r() * 1.5) * 35;
      py += Math.sin(a + r() * 1.5) * 35;
      d += `L${Math.round(px)} ${Math.round(py)}`;
    }
  }
  return d;
};

const TEXTURE: [string, string][] = [
  ["#cdebb0", speckle(3, 110, 0, 0, 700, 2823, 18)],
  ["#cdebb0", speckle(5, 110, 600, 0, 750, 2823, 26)],
  ["#add19e", speckle(7, 300, 0, 0, 1400, 2823, 26)],
  ["#f2efe9", speckle(9, 60, 680, 100, 700, 2600, 18)],
  ["#c8d7ab", speckle(11, 80, 600, 0, 900, 2800, 14)],
  ["#add19e", speckle(13, 90, 1430, 1850, 380, 950, 24)],
  ["#add19e", speckle(15, 70, 2400, 1420, 420, 1400, 24)],
  ["#cdebb0", speckle(17, 60, 2300, 1420, 520, 1400, 26)],
  ["#f2efe9", speckle(19, 40, 1430, 1900, 500, 900, 22)],
  ["#add19e", speckle(21, 50, 1430, 100, 200, 1000, 16)],
  ["#c8d7ab", speckle(23, 40, 2100, 2400, 500, 400, 20)],
];

const STREETS = [
  streets(31, 300, 1180, 1120, 700, 640), streets(32, 40, 1920, 530, 160, 320), streets(33, 40, 2660, 890, 160, 230),
  streets(34, 50, 2260, 1750, 260, 220), streets(35, 40, 1500, 480, 130, 330), streets(36, 25, 2100, 400, 180, 60),
  streets(37, 30, 1600, 2610, 170, 90), streets(38, 30, 2240, 2000, 150, 150), streets(39, 20, 980, 140, 90, 90),
  streets(40, 30, 1180, 1600, 120, 350), streets(41, 40, 1450, 2500, 1300, 300), streets(42, 70, 1900, 100, 900, 1200),
].join("");

const centre = (() => {
  const r = seeded(77);
  return Array.from({ length: 95 }, () => {
    const a = r() * 6.28, q = Math.sqrt(r());
    return [Math.round(1425 + Math.cos(a) * q * 115), Math.round(1325 + Math.sin(a) * q * 130)];
  }).sort((p, q) => p[1] - q[1]);
})();

const lines = (list: string[], cls: string) => list.map((p) => svg`<polyline class=${cls} points=${p}/>`);
const layer = (draw: (t: Tile) => unknown) =>
  TILES.map((t) => svg`<g transform="translate(${t.dx} ${t.dy})">${draw(t)}</g>`);
const pairs = (s: string) => s.split(" ").map((p) => p.split(",").map(Number));

const mapDrawing = html`
  <svg class="map-art" viewBox="0 0 2823 2823" role="img" aria-label="Carte des lieux">
    <rect width="2823" height="2823" fill="#eef0d5"/>
    ${layer((t) => t.areas.map(([c, ps]) => ps.map((p) => svg`<polygon fill=${c} stroke=${c} class="area" points=${p}/>`)))}
    ${TEXTURE.map(([c, d]) => svg`<path fill=${c} d=${d}/>`)}
    ${layer((t) => t.areas.filter(([c]) => c === "#dddcdc" || c === "#d6d99f").map(([c, ps]) => ps.map((p) => svg`<polygon fill=${c} points=${p}/>`)))}
    <path class="street" d=${STREETS}/>
    ${layer((t) => [t.water.map((p) => svg`<polygon fill="#aad3df" points=${p}/>`), lines(t.rivers, "river"), lines(t.park, "park-band"), lines(t.park, "park"), lines(t.borders, "border")])}
    <g transform="translate(1434 -24)">
      <path d="M555 1258 885 1208" stroke="#bbbbd0" stroke-width="16"/>
      <path d="M560 1215 700 1190M560 1240 690 1215M565 1260V1330" stroke="#bbbbd0" stroke-width="8"/>
      <path d="M245 460c-10-30 30-50 15-80s30 0 30 20-20 50-30 70z" fill="none" stroke="#ffc0cb" stroke-width="7"/>
    </g>
    <polygon points="90,845 170,842 240,870 190,908 85,865" fill="#00000012" stroke="#a97783" stroke-width="6"/>
    ${layer((t) => lines(t.minor, "minor-case"))}
    ${layer((t) => lines(t.minor, "minor"))}
    ${layer((t) => lines(t.secondary, "secondary-case"))}
    ${layer((t) => lines(t.secondary, "secondary"))}
    ${layer((t) => lines(t.primary, "primary-case"))}
    ${layer((t) => lines(t.primary, "primary"))}
    ${layer((t) => [lines(t.trunk, "trunk-case"), lines(t.trunk, "trunk")])}
    ${layer((t) => lines(t.motorway, "motorway-case"))}
    ${layer((t) => lines(t.motorway, "motorway"))}
    ${layer((t) => [lines(t.rail, "rail"), lines(t.rail, "rail-dash")])}
    ${layer((t) => t.labels.map(([x, y, s, size]) => svg`<text class="place ${size ? "town" : ""}" x=${x} y=${y}>${s}</text>`))}
    <g transform="translate(1434 -24)">
      ${EXITS.map(([x, y, s]) => svg`<text class="exit" x=${x} y=${y}>${s}</text>`)}
      ${["Aéroport", "de Clermont-", "Ferrand", "Auvergne"].map((s, i) => svg`<text class="airport" x="665" y=${1303 + i * 36}>${s}</text>`)}
      <path fill="#8461c4" d="M663 1233q4 0 4 8v8l15 10v5l-15-4v9l6 5v3l-10-2-10 2v-3l6-5v-9l-15 4v-5l15-10v-8q0-8 4-8z"/>
    </g>
    ${layer((t) => t.shields.map(([x, y, s, kind]) => {
      const rows = s.split("|");
      const w = rows[0].length * 15 + 40, h = 16 + rows.length * 36;
      return svg`<rect class="shield-${kind}" x=${x - w / 2} y=${y - h / 2} width=${w} height=${h} rx="5"/>
        ${rows.map((row, i) => svg`<text class="ref-${kind}" x=${x} y=${y + 11 + (i - (rows.length - 1) / 2) * 36}>${row}</text>`)}`;
    }))}
    ${layer((t) => [
      pairs(t.peaks).map(([x, y]) => svg`<path fill="#d40000" d="M${x} ${y - 11}l12 21h-24z"/>`),
      pairs(t.hills).map(([x, y]) => svg`<path fill="#d08f55" d="M${x} ${y - 11}l12 21h-24z"/>`),
    ])}
    ${layer((t) => pairs(t.venues).map(([x, y]) => svg`<circle class="halo" cx=${x} cy=${y} r="25"/><circle class="venue" cx=${x} cy=${y} r="20"/>`))}
    ${centre.map(([x, y], i) => svg`<circle class="halo" cx=${x} cy=${y} r="25"/><circle class=${i % 4 ? "ring" : "venue"} cx=${x} cy=${y} r="20"/>`)}
    <path d="M1409 1405c-8-26-34-44-34-78a34 34 0 0 1 68 0c0 34-26 52-34 78z" fill="#009090" stroke="#fff" stroke-width="10"/>
  </svg>`;

/* ---------- Form data ---------- */

interface Field { id: string; label: string; value: string; help?: string; required?: boolean; type?: string; last?: boolean }

const FIELDS: Field[] = [
  { id: "name", label: "Nom", value: "La Comédie de Clermont", help: "Nom du lieu", required: true, last: true },
  { id: "address", label: "Adresse", value: "69 boulevard François Mitterrand", help: "Adresse de ce lieu (sans le nom de la ville)" },
  { id: "postcode", label: "Code postal", value: "", help: "Le code postal ne sera pas affiché, mais facilite la recherche d'adresse au moment de la saisie." },
  { id: "city", label: "Ville", value: "Clermont-Ferrand", help: "Nom de la ville", required: true },
  { id: "location", label: "Location", value: "45.770778,3.084904", required: true },
  { id: "access", label: "Accessibilité", value: "", help: "Accessibilité du lieu en une phrase" },
  { id: "access-url", label: "URL d'accessibilité", value: "", type: "url", help: "Une URL (par exemple sur le site Access-libre) où l'accessibilité est décrite.", last: true },
];

const ALIASES = [
  "Studio", "Au PopCorner", "Salle de l'Horizon", "Au PopCorner", "Salle des Possibles", "Studio", "Salle de l'Horizon",
  "Parvis de La Comédie", "Hall des Pas perdus", "Hall des pas perdus", "Traversée centrale", "STUDIO", "La Comédie",
  "La Comédie", "au PopCorner", "Traversée centrale", "Traversée centrale", "Salle de l’Horizon", "La Comédie de Clermont",
  "Hall des pas perdus", "Comédie de Clermont, 69 Boulevard François Mitterrand, Clermont-Ferrand", "Hall des Pas perdus",
  "Hall des Pas perdus", "Hall des Pas perdus", "Hall des Pas perdus", "Hall des Pas perdus", "Hall des Pas perdus",
  "Dans tout le théâtre", "Hall des Pas perdus", "Hall des Pas perdus et Parvis de l'École d'art (Place Louise Bourgeois)",
  "Hall des Pas perdus et École d'art", "Bibliothèque de La Comédie", "Bibliothèque", "Au Foyer de La Comédie", "À La Comédie",
  "Façade extérieure de La Comédie, Angle rue Léo Lagrange et boulevard François-Mitterand", "Traversée sud",
  "69 boulevard François Mitterrand, 63000 Clermont-Ferrand, France", "Foyer de La Comédie",
];

const STATS: [string, string][] = [["alert", "9"], ["calendar", "469"], ["copy", "109"], ["pin", "582"], ["mail", "3"], ["target", "158"]];

@customElement("app-root")
export class AppRoot extends LitElement {
  static styles = css`
    :host { display: block; min-height: 100vh; background: #11191f; color: #bbc0c8; font-family: "Noto Sans", sans-serif; font-size: 18px; line-height: 26px; }
    * { box-sizing: border-box; }
    a { color: #4db6a4; text-decoration: none; }
    h1, h2, p { margin: 0; }
    input, button, select, textarea { font: inherit; color: inherit; margin: 0; }
    .icon { width: 1em; height: 1em; fill: none; stroke: currentColor; stroke-width: 2; stroke-linecap: round; stroke-linejoin: round; flex: none; }

    .top { position: relative; display: flex; justify-content: space-between; height: 54px; padding: 0 18px 0 12px; border-bottom: 1px solid #232f38; }
    .brand { display: flex; gap: 9px; padding-top: 9px; }
    .logo { width: 30px; height: 34px; }
    .brand-text { display: flex; flex-direction: column; }
    .brand-name { font-size: 15px; line-height: 22px; }
    .tagline { font-size: 9px; line-height: 12px; font-style: italic; }
    .nav { display: flex; gap: 22px; font-size: 18px; line-height: 54px; }
    .nav a, .stats a, .foot a, .explore a { display: flex; align-items: center; gap: 5px; }
    .nav .icon { width: 16px; height: 16px; }
    .stats { position: absolute; top: 0; left: 50%; transform: translateX(-50%); display: flex; gap: 2px; padding: 0 9px 4px 10px; background: #18232c; border-radius: 0 0 4px 4px; font-size: 10px; line-height: 19px; }
    .stats a { gap: 2px; color: #e8eeee; background: #265f59; padding: 0 8px; }
    .stats .warn { background: #b71c1c; box-shadow: inset 0 0 0 1px #d32020; }
    .stats .admin { background: none; color: #4db6a4; padding: 0 0 0 10px; }

    .title { padding: 5px 4px 19px; font-size: 35px; line-height: 35px; font-weight: 700; color: #eef0f2; }
    .card { background: #131e24; border-radius: 4px; box-shadow: 0 0 44px rgba(0, 10, 14, 0.55); }
    .form { margin: 0 4px; padding: 11px 10px 18px; display: grid; grid-template-columns: 1fr 1fr; column-gap: 3px; }
    .cell { min-width: 0; }
    .field { display: flex; flex-direction: column; padding-bottom: 1px; }
    .field.spaced { padding-bottom: 56px; }
    .field.bare { padding-bottom: 9px; }
    .label { display: block; margin-bottom: 3px; }
    .req { color: #f00; }
    .help { margin-top: 8px; font-size: 14px; line-height: 20px; }
    .box { width: 100%; height: 54px; padding: 0 18px; border: 1px solid #1f2d38; border-radius: 4px; background: #141e26; color: #e0e3e7; font-size: 17px; outline: none; }
    .aliases { display: flex; flex-direction: column; gap: 10px; padding-right: 5px; margin-bottom: 10px; }
    .aliases .box:nth-child(odd), .aliases .box:nth-child(10n) { margin-bottom: 1px; }
    .btn { display: block; width: 100%; height: 55px; border: 0; border-radius: 4px; background: #265f59; color: #fff; text-align: center; cursor: pointer; }
    .btn.secondary { background: #596b78; }
    .alias-help { margin: 7px 0 9px; font-size: 14px; line-height: 21px; }
    .check { appearance: none; display: block; width: 22px; height: 22px; margin: 6px 0 10px; border-radius: 4px; background: #265f59 url("data:image/svg+xml,%3Csvg xmlns='http://www.w3.org/2000/svg' viewBox='0 0 24 24' fill='none' stroke='white' stroke-width='4' stroke-linecap='round' stroke-linejoin='round'%3E%3Cpath d='M20 6 9 17l-5-5'/%3E%3C/svg%3E") center / 14px no-repeat; }

    .map { position: relative; aspect-ratio: 1; border-radius: 4px; overflow: hidden; background: #eef0d5; }
    .map-art { display: block; width: 100%; height: 100%; }
    .map-art text { font-family: "Noto Sans", sans-serif; font-size: 30px; text-anchor: middle; }
    .map-zoom { position: absolute; top: 10px; left: 10px; display: flex; flex-direction: column; border: 2px solid rgba(0, 0, 0, 0.25); border-radius: 3px; }
    .map-zoom button { width: 25px; height: 25px; padding: 0; border: 1px solid #265f59; background: #fff; color: #000; font: 700 18px/22px "Liberation Sans", sans-serif; }
    .credit { position: absolute; right: 0; bottom: 0; display: flex; align-items: center; gap: 4px; padding: 0 4px; background: rgba(255, 255, 255, 0.8); color: #0078a8; font: 13px/18px "Liberation Sans", sans-serif; }
    .flag { width: 12px; height: 9px; background: linear-gradient(#4c7be1 50%, #ffd500 50%); }
    .area { stroke-width: 10; stroke-linejoin: round; }
    polyline { fill: none; stroke-linejoin: round; stroke-linecap: round; }
    .street { fill: none; stroke: #bfbcbc; stroke-width: 2; }
    .river { stroke: #aad3df; stroke-width: 7; }
    .park-band { stroke: #8cc084; stroke-width: 14; opacity: 0.6; }
    .park { stroke: #6fa368; stroke-width: 4; stroke-dasharray: 12 4; }
    .border { stroke: #a68aa6; stroke-width: 4; stroke-dasharray: 14 6 4 6; opacity: 0.7; }
    .minor-case { stroke: #bdbab6; stroke-width: 8; }
    .minor { stroke: #fff; stroke-width: 6; }
    .secondary-case { stroke: #c9cb84; stroke-width: 13; }
    .secondary { stroke: #f7fabf; stroke-width: 9; }
    .primary-case { stroke: #d9a768; stroke-width: 14; }
    .primary { stroke: #fcd6a4; stroke-width: 10; }
    .trunk-case { stroke: #d98a70; stroke-width: 15; }
    .trunk { stroke: #f9b29c; stroke-width: 12; }
    .motorway-case { stroke: #d0617b; stroke-width: 16; }
    .motorway { stroke: #e892a2; stroke-width: 12; }
    .rail { stroke: #6f6f6f; stroke-width: 7; }
    .rail-dash { stroke: #d8d8d8; stroke-width: 2; stroke-dasharray: 22 14; }
    .place { fill: #333; stroke: #fffc; stroke-width: 5; paint-order: stroke; }
    .map-art .town { font-size: 38px; }
    .map-art .exit { font-size: 27px; font-style: italic; fill: #a01030; stroke: #fffa; stroke-width: 4; paint-order: stroke; }
    .map-art .airport { font-size: 29px; font-style: italic; fill: #8461c4; stroke: #fffa; stroke-width: 4; paint-order: stroke; }
    .shield-a { fill: #edccd3; stroke: #c986a0; stroke-width: 3; }
    .shield-d { fill: #f1f0d5; stroke: #c8cc9a; stroke-width: 3; }
    .shield-n { fill: #f8e3d0; stroke: #e0b090; stroke-width: 3; }
    .ref-a { fill: #7a1638; }
    .ref-d { fill: #55562a; }
    .ref-n { fill: #6b4423; }
    .halo { fill: #fff; stroke: #8a8f8a; stroke-width: 2; }
    .venue { fill: #009090; stroke: #fff; stroke-width: 7; }
    .ring { fill: #fff; stroke: #a8a8a8; stroke-width: 3; }

    .hint { margin-top: 14px; }
    .switch-row { display: flex; align-items: center; gap: 14px; margin-top: 11px; }
    .switch { appearance: none; width: 39px; height: 22px; padding: 3px; border-radius: 11px; background: #2f3a4d; }
    .switch::before { content: ""; display: block; width: 16px; height: 16px; border-radius: 50%; background: #fff; }
    .editor { border: 1px solid #1f2d38; }
    .tools { display: flex; align-items: center; height: 32px; padding-left: 10px; background: #18232c; border-bottom: 1px solid #1f2d38; font: 11px/20px "Liberation Sans", sans-serif; }
    .tools button { display: flex; align-items: center; gap: 4px; padding: 0; border: 0; background: none; }
    .tools .tool { width: 18px; margin-right: 9px; justify-content: center; }
    .tools .caret { width: 14px; margin-right: 6px; justify-content: center; }
    .tools .caret .icon, .pick .icon { width: 10px; height: 10px; stroke-width: 3; }
    .tools .list { margin-right: 4px; }
    .sep { width: 1px; height: 20px; background: #25323c; margin: 0 10px; }
    .pick + .sep { margin: 0 6px 0 8px; }
    .tool + .sep { margin: 0 5px 0 0; }
    .tool-art { width: 16px; height: 16px; fill: currentColor; }
    .pick { display: flex; align-items: center; width: 104px; }
    .pick select { flex: 1; appearance: none; border: 0; background: none; padding: 0; }
    .pick .icon { margin-right: 2px; }
    .writing { display: block; width: 100%; height: 250px; border: 0; background: #11171d; resize: none; outline: none; }
    .counts { display: flex; gap: 8px; margin-top: 8px; }
    .desc-help { font-size: 14px; line-height: 21px; }

    .up { padding: 37px 7px 21px; text-align: right; font-size: 15px; }
    .explore { margin: 0 4px; padding: 2px 0 4px; display: grid; grid-template-columns: 30% 1fr 1fr 1fr; align-items: stretch; font-size: 16px; }
    .explore h2 { display: grid; place-items: center; height: 74px; background: #18232c; font-size: 19px; color: #dfe3e7; }
    .explore a { justify-content: center; gap: 20px; }
    .explore .icon { width: 32px; height: 32px; }
    .foot { display: grid; grid-template-columns: repeat(5, 1fr); align-items: end; padding: 49px 0 20px; font-size: 16px; }
    .foot a { justify-content: center; gap: 4px; }
    .admin-cell { text-align: center; font-size: 13px; line-height: 18px; }
    .admin-cell a { font-size: 16px; line-height: 22px; }
    .masto { fill: #1b8079; stroke: none; }
  `;

  private field(f: Field) {
    return html`<div class="field ${f.last ? "spaced" : ""} ${f.help ? "" : "bare"}">
      <label class="label" for=${f.id}>${f.label} : ${f.required ? html`<span class="req">*</span>` : ""}</label>
      <input class="box" id=${f.id} type=${f.type ?? "text"} .value=${f.value} />
      ${f.help ? html`<span class="help">${f.help}</span>` : ""}
    </div>`;
  }

  render() {
    return html`
      <header class="top">
        <div class="brand">
          <svg class="logo" viewBox="0 0 30 36" aria-hidden="true">
            <path d="M20 8q1-5 5-7" fill="none" stroke="#8fb3b5" stroke-width="2"/>
            <ellipse cx="14.5" cy="21" rx="14" ry="15" fill="#a9c8ca"/>
            <ellipse cx="10" cy="12" rx="5" ry="4" fill="#fff"/>
            <circle cx="22" cy="27" r="4" fill="#8fb0b6"/><circle cx="7" cy="29" r="4" fill="#dfeeee"/>
            <path d="m13 15 2 4-1 6-3 7M15 20l4 5 3 7M15 16l6 4" fill="none" stroke="#b5475a" stroke-width="1"/>
            <path d="m19 16 6-3v6z" fill="#c4485d"/>
          </svg>
          <div class="brand-text">
            <span class="brand-name">root @ <a href="#">Pommes de lune</a></span>
            <span class="tagline">Agenda participatif des sorties culturelles à Clermont-Ferrand et aux environs</span>
          </div>
        </div>
        <div class="stats">
          ${STATS.map(([i, n]) => html`<a href="#" class=${i === "alert" ? "warn" : ""}>${icon(i)}${n}</a>`)}
          <a href="#" class="admin">Administrer ${icon("gear")}</a>
        </div>
        <nav class="nav">
          <a href="#">Quand ? ${icon("calendar")}</a>
          <a href="#">Rechercher ${icon("search")}</a>
          <a href="#">Ajouter un événement ${icon("plus")}</a>
        </nav>
      </header>

      <h1 class="title">Modification d'un lieu</h1>

      <form class="card form">
        <div class="cell">${FIELDS.map((f) => this.field(f))}</div>
        <div class="cell">
          <div class="map">
            ${mapDrawing}
            <div class="map-zoom"><button type="button">+</button><button type="button">−</button></div>
            <a class="credit" href="#"><span class="flag"></span>Leaflet</a>
          </div>
          <p class="hint">Cliquez pour ajuster la position GPS</p>
          <div class="switch-row">
            <input class="switch" type="checkbox" role="switch" id="lock" />
            <label for="lock">Verrouiller la position</label>
          </div>
        </div>

        <div class="cell">
          <div class="label" id="aliases-label">Noms alternatifs :</div>
          <div class="aliases" role="group" aria-labelledby="aliases-label">
            ${ALIASES.map((a) => html`<input class="box" type="text" aria-labelledby="aliases-label" .value=${a} />`)}
          </div>
          <button class="btn" type="button">Ajouter un autre</button>
          <p class="alias-help">Noms et adresses alternatives qui seront utilisées pour associer une adresse avec la localisation en forme libre d'un événement</p>
          <label for="detect">Lors de l'enregistrement, utiliser des alias pour détecter tous les événements correspondants dont la place est manquante.</label>
          <input class="check" type="checkbox" id="detect" checked />
        </div>
        <div class="cell">
          <label class="label" for="description">Description :</label>
          <div class="editor">
            <div class="tools">
              <button type="button">
                <svg class="tool-art" viewBox="0 0 20 20"><path d="M2 1h10l5 5v4h-2V7l-4-4H4v2H2zM2 15h2v3h4v2H2zM6 7l-4 3 4 3v-2l-2-1 2-1zM9 7l4 3-4 3v-2l2-1-2-1zM17 11l2 2-7 7h-2v-2z"/></svg>Source
              </button>
              <span class="sep"></span>
              <span class="pick"><select aria-label="Style de paragraphe"><option>Paragraphe</option></select>${icon("chevron")}</span>
              <span class="sep"></span>
              <button type="button" class="tool" aria-label="Gras"><svg class="tool-art" viewBox="0 0 20 20"><path fill-rule="evenodd" d="M4 3h7.5a4 4 0 0 1 2.5 6.8A4.2 4.2 0 0 1 12 17H4zM7 5.5V9h3.5a1.7 1.7 0 0 0 0-3.5zM7 11.3v3.2h4a1.6 1.6 0 0 0 0-3.2z"/></svg></button>
              <button type="button" class="tool" aria-label="Italique"><svg class="tool-art" viewBox="0 0 20 20"><path d="M7 3h9v1.5h-3L10 16h3v1.5H4V16h3.5l3-11.5H7z"/></svg></button>
              <button type="button" class="tool" aria-label="Lien"><svg class="tool-art" viewBox="0 0 20 20"><g fill="none" stroke="currentColor" stroke-width="1.5" stroke-linecap="round"><path d="m8 6 3-3a3.800 3.800 0 0 1 6 5l-4 5a3.800 3.800 0 0 1-4 1M12 14l-3 3a3.800 3.800 0 0 1-6-5l4-5a3.800 3.800 0 0 1 4-1M8 12l4-5"/></g></svg></button>
              <span class="sep"></span>
              <button type="button" class="tool list" aria-label="Liste à puces"><svg class="tool-art" viewBox="0 0 20 20"><path d="M7 5h12v1.500H7zM7 14h12v1.500H7z"/><circle cx="2.500" cy="5.700" r="2"/><circle cx="2.500" cy="14.700" r="2"/></svg></button>
              <button type="button" class="caret" aria-label="Options de puces">${icon("chevron")}</button>
              <button type="button" class="tool list" aria-label="Liste numérotée"><svg class="tool-art" viewBox="0 0 20 20"><path d="M7 5h12v1.500H7zM7 14h12v1.500H7z"/><path d="M1 3.500 3 2v6M1 12.500q2-1.500 3 0t-3 5h3.500" fill="none" stroke="currentColor" stroke-width="1.300"/></svg></button>
              <button type="button" class="caret" aria-label="Options de numéros">${icon("chevron")}</button>
              <button type="button" class="tool" aria-label="Citation"><svg class="tool-art" viewBox="0 0 20 20"><path d="M2 17v-7q0-6 6-7v3Q6 7 6 10h3v7zM11 17v-7q0-6 6-7v3q-2 1-2 4h3v7z"/></svg></button>
            </div>
            <textarea class="writing" id="description"></textarea>
          </div>
          <div class="counts"><span>Mots : 0</span><span>Caractères : 0</span></div>
          <p class="desc-help">Description du lieu, inclus l'accessibilité.</p>
        </div>

        <button class="btn secondary" type="button">Annuler</button>
        <button class="btn" type="submit">Envoyer</button>
      </form>

      <div class="up"><a href="#">⇑ haut de la page</a></div>

      <section class="card explore">
        <h2>Explorer autrement</h2>
        <a href="#">${icon("pin")}les lieux</a>
        <a href="#">${icon("users")}les organisations</a>
        <a href="#">${icon("tag")}les étiquettes</a>
      </section>

      <footer class="foot">
        <a href="#">${icon("users")}à propos</a>
        <a href="#">${icon("lines")}mentions légales</a>
        <a href="#">${icon("mail")}contact</a>
        <a href="#"><svg class="icon masto" viewBox="0 0 24 24" aria-hidden="true"><path fill-rule="evenodd" d="M23 5.500C22.500 3 20.500 1 18 .6 14 0 10 0 6 .6 3.500 1 1.500 3 1.200 5.500.8 9 .8 13 1.500 17c.6 3 3 5.500 6 6 3 .7 6 .5 8.500-.3V20c-2.500.7-5 .8-7.500.2-1.200-.3-2-1.200-2-2.700 4 .9 8 .9 12-.2 2.500-.8 4-2 4.300-4.500.4-2.500.5-5 .2-7.300zM18.500 14h-2.600V8c0-2.500-3-2.500-3 0v3.500h-2.300V8c0-2.500-3-2.500-3 0v6H5V7.500c0-4 4.800-4.800 6.700-1.800 2-3 6.800-2.200 6.800 1.800z"/></svg>Mastodon</a>
        <div class="admin-cell"><a href="#">${icon("gear")}administrer</a>Vous êtes connecté(e) en tant que root</div>
      </footer>
    `;
  }
}
